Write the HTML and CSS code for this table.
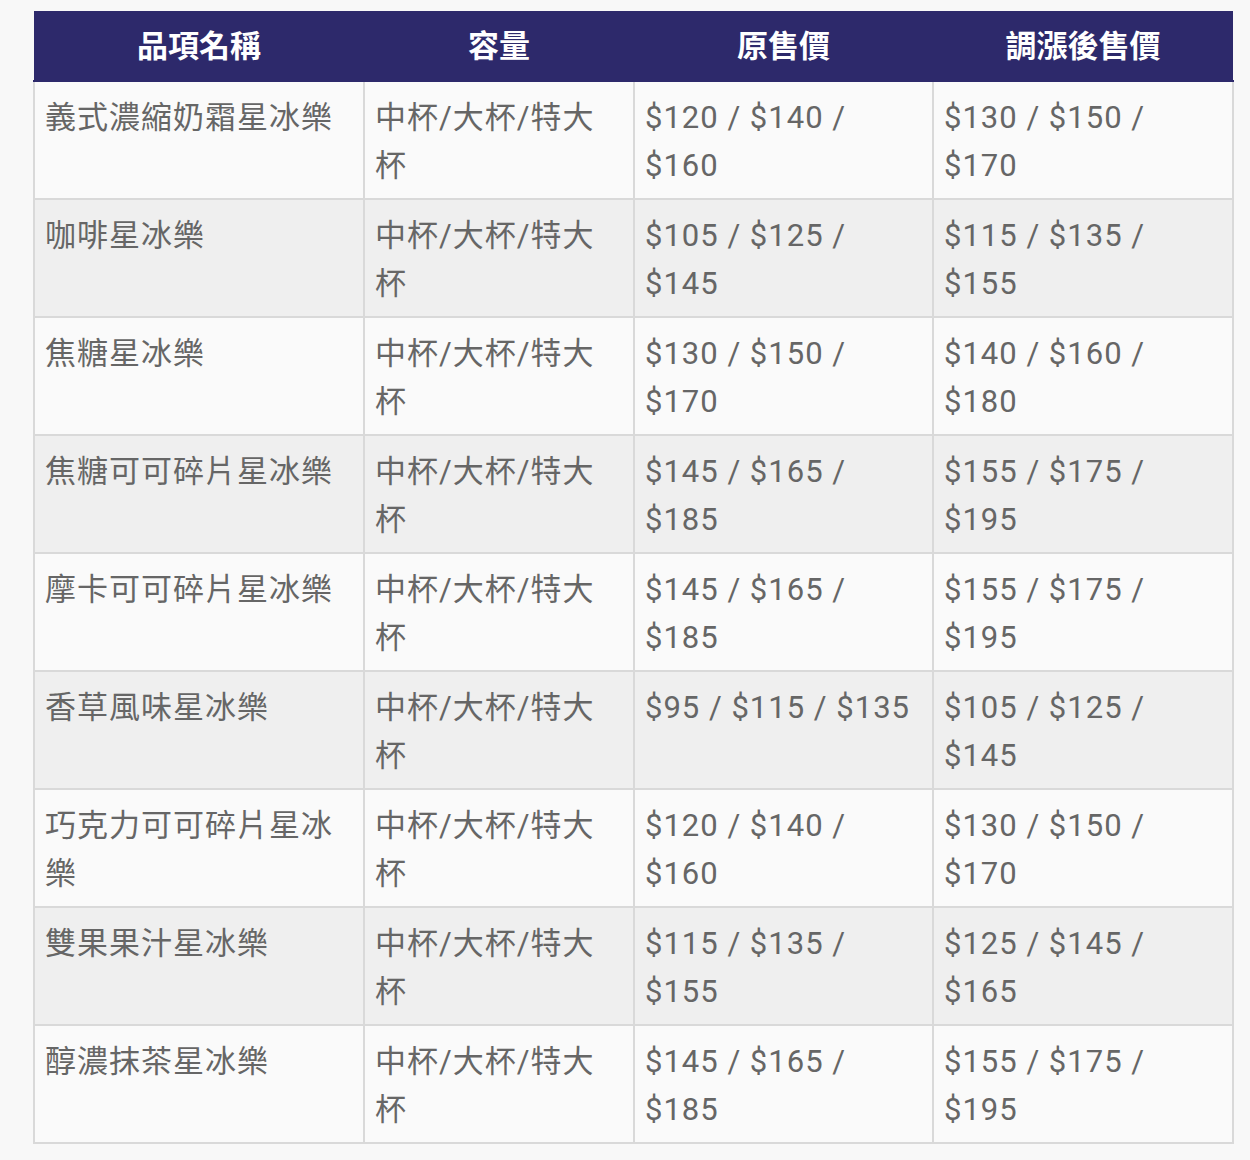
FILE: index.html
```html
<!DOCTYPE html>
<html lang="zh-Hant">
<head>
<meta charset="utf-8">
<title>星冰樂價格</title>
<link rel="stylesheet" href="styles.css">
</head>
<body>
<table class="price-table">
  <colgroup>
    <col class="c1"><col class="c2"><col class="c3"><col class="c4">
  </colgroup>
  <thead>
    <tr><th>品項名稱</th><th>容量</th><th>原售價</th><th>調漲後售價</th></tr>
  </thead>
  <tbody>
    <tr><td>義式濃縮奶霜星冰樂</td><td>中杯/大杯/特大杯</td><td>$120 / $140 / $160</td><td>$130 / $150 / $170</td></tr>
    <tr><td>咖啡星冰樂</td><td>中杯/大杯/特大杯</td><td>$105 / $125 / $145</td><td>$115 / $135 / $155</td></tr>
    <tr><td>焦糖星冰樂</td><td>中杯/大杯/特大杯</td><td>$130 / $150 / $170</td><td>$140 / $160 / $180</td></tr>
    <tr><td>焦糖可可碎片星冰樂</td><td>中杯/大杯/特大杯</td><td>$145 / $165 / $185</td><td>$155 / $175 / $195</td></tr>
    <tr><td>摩卡可可碎片星冰樂</td><td>中杯/大杯/特大杯</td><td>$145 / $165 / $185</td><td>$155 / $175 / $195</td></tr>
    <tr><td>香草風味星冰樂</td><td>中杯/大杯/特大杯</td><td>$95 / $115 / $135</td><td>$105 / $125 / $145</td></tr>
    <tr><td>巧克力可可碎片星冰樂</td><td>中杯/大杯/特大杯</td><td>$120 / $140 / $160</td><td>$130 / $150 / $170</td></tr>
    <tr><td>雙果果汁星冰樂</td><td>中杯/大杯/特大杯</td><td>$115 / $135 / $155</td><td>$125 / $145 / $165</td></tr>
    <tr><td>醇濃抹茶星冰樂</td><td>中杯/大杯/特大杯</td><td>$145 / $165 / $185</td><td>$155 / $175 / $195</td></tr>
  </tbody>
</table>
</body>
</html>
```
FILE: styles.css
```css
html, body {
  margin: 0;
  background: #f8f8f8;
}
body {
  padding: 11px 0 0 33px;
  font-family: Roboto, "Noto Sans CJK TC", sans-serif;
  color: #666;
}
.price-table {
  border-collapse: collapse;
  table-layout: fixed;
  width: 1199px;
  font-size: 31px;
  line-height: 48px;
}
.c1 { width: 330px; }
.c2 { width: 270px; }
.c3 { width: 299px; }
.c4 { width: 300px; }
.price-table th {
  background: #2d296b;
  color: #fff;
  font-weight: 700;
  text-align: center;
  padding: 12px 12px 9px;
  border: 0;
  border-bottom: 2px solid #2d296b;
}
.price-table td {
  vertical-align: top;
  text-align: left;
  padding: 12px 11px 8px 10px;
  border: 2px solid #d9d9d9;
  background: #fafafa;
  letter-spacing: 1px;
}
.price-table tbody tr:nth-child(even) td {
  background: #efefef;
}
```
